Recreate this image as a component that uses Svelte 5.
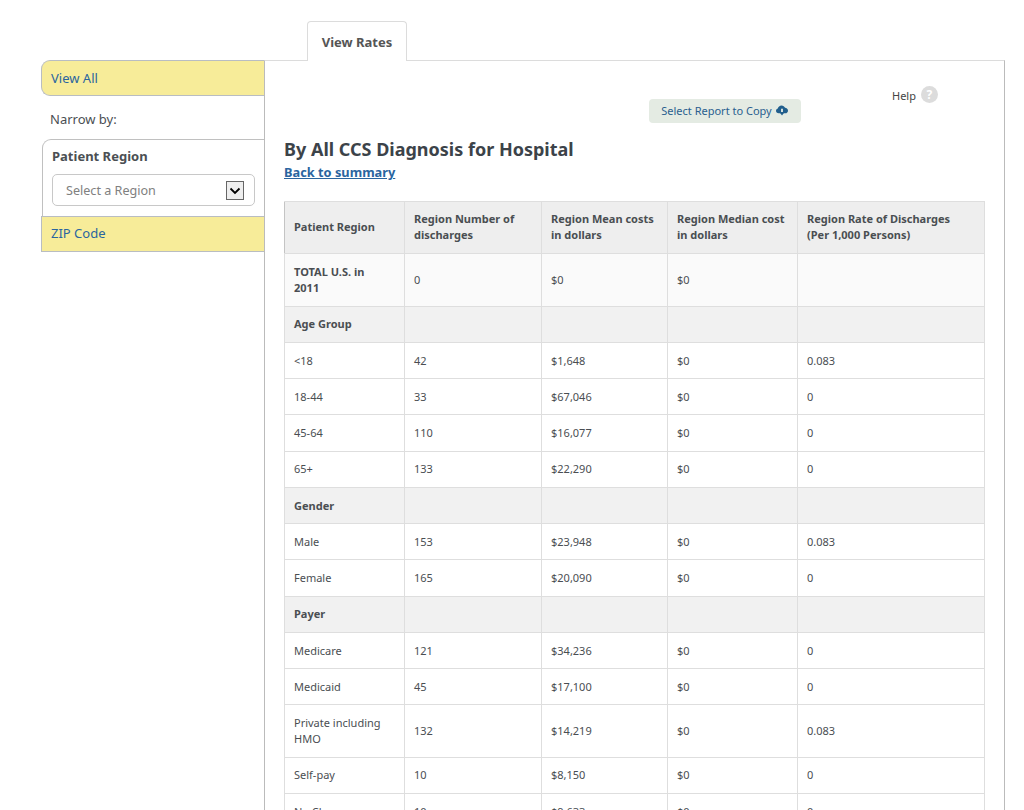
<script>
  const headers = [
    "Patient Region",
    "Region Number of discharges",
    "Region Mean costs in dollars",
    "Region Median cost in dollars",
    "Region Rate of Discharges (Per 1,000 Persons)"
  ];

  const rows = [
    { label: "TOTAL U.S. in 2011", values: ["0", "$0", "$0", ""], kind: "total" },
    { label: "Age Group", values: ["", "", "", ""], kind: "group" },
    { label: "<18", values: ["42", "$1,648", "$0", "0.083"] },
    { label: "18-44", values: ["33", "$67,046", "$0", "0"] },
    { label: "45-64", values: ["110", "$16,077", "$0", "0"] },
    { label: "65+", values: ["133", "$22,290", "$0", "0"] },
    { label: "Gender", values: ["", "", "", ""], kind: "group" },
    { label: "Male", values: ["153", "$23,948", "$0", "0.083"] },
    { label: "Female", values: ["165", "$20,090", "$0", "0"] },
    { label: "Payer", values: ["", "", "", ""], kind: "group" },
    { label: "Medicare", values: ["121", "$34,236", "$0", "0"] },
    { label: "Medicaid", values: ["45", "$17,100", "$0", "0"] },
    { label: "Private including HMO", values: ["132", "$14,219", "$0", "0.083"] },
    { label: "Self-pay", values: ["10", "$8,150", "$0", "0"] },
    { label: "No Charge", values: ["10", "$9,633", "$0", "0"] }
  ];
</script>

<div class="page">
  <div class="tabs">
    <button class="tab">View Rates</button>
  </div>

  <div class="layout">
    <aside class="sidebar">
      <a class="filter first" href="#all">View All</a>
      <p class="narrow">Narrow by:</p>
      <div class="region-box">
        <h3>Patient Region</h3>
        <div class="select-wrap">
          <select>
            <option>Select a Region</option>
          </select>
          <span class="arrow">
            <svg width="12" height="8" viewBox="0 0 12 8">
              <path d="M1.5 1.500 L6 6 L10.500 1.500" fill="none" stroke="#000" stroke-width="1.800" />
            </svg>
          </span>
        </div>
      </div>
      <a class="filter" href="#zip">ZIP Code</a>
    </aside>

    <main class="content">
      <div class="tools">
        <button class="copy">
          <span>Select Report to Copy</span>
          <svg width="12" height="11" viewBox="0 0 13 11">
            <path d="M3 8.500 C1 8.500 0 7.200 0 5.800 C0 4.500 .9 3.600 2 3.400 C2.400 1.400 4 0 6 0 C7.800 0 9.200 1 9.800 2.600 C11.600 2.700 13 4 13 5.700 C13 7.300 11.800 8.500 10 8.500 Z" fill="#215f8d" />
            <path d="M5.500 3.500 H7.500 V7 H5.500 Z" fill="#e4ebe3" />
            <path d="M3.800 7.500 H9.200 L6.500 11 Z" fill="#215f8d" />
          </svg>
        </button>
        <div class="help">Help <span class="help-icon">?</span></div>
      </div>

      <h1>By All CCS Diagnosis for Hospital</h1>
      <a class="back" href="#summary">Back to summary</a>

      <table>
        <thead>
          <tr>
            {#each headers as h}
              <th>{h}</th>
            {/each}
          </tr>
        </thead>
        <tbody>
          {#each rows as row}
            <tr class={row.kind}>
              <td class="label">{row.label}</td>
              {#each row.values as v}
                <td>{v}</td>
              {/each}
            </tr>
          {/each}
        </tbody>
      </table>
    </main>
  </div>
</div>

<style>
  :global(body) {
    background: #fff;
    font-family: "Noto Sans", "Open Sans", sans-serif;
    color: #3f4448;
  }
  .page {
    height: 810px;
    overflow: hidden;
    padding: 21px 19px 0 41px;
    box-sizing: border-box;
  }
  .tabs {
    display: flex;
    padding-left: 266px;
    height: 39px;
  }
  .tab {
    width: 100px;
    height: 40px;
    background: #fff;
    border: 1px solid #dcdcdc;
    border-bottom: none;
    border-radius: 4px 4px 0 0;
    font: bold 13px "Noto Sans", sans-serif;
    color: #555;
    padding: 0;
    position: relative;
    z-index: 2;
  }
  .layout {
    display: flex;
    align-items: stretch;
  }
  .sidebar {
    width: 223px;
    flex: none;
    position: relative;
    z-index: 1;
  }
  .filter {
    display: block;
    height: 34px;
    line-height: 33px;
    background: #f7ec99;
    border: 1px solid #b9bdc2;
    border-right: none;
    padding-left: 9px;
    font-size: 13px;
    color: #2a659f;
    text-decoration: none;
  }
  .filter.first {
    line-height: 35px;
    border-radius: 9px 0 0 9px;
  }
  .narrow {
    margin: 0;
    padding: 13px 0 0 9px;
    height: 30px;
    line-height: 20px;
    font-size: 13px;
    color: #4b4f53;
  }
  .region-box {
    margin-left: 1px;
    height: 76px;
    border: 1px solid #c0c0c0;
    border-right: none;
    border-bottom: none;
    border-radius: 9px 0 0 0;
    padding: 0 9px;
    background: #fff;
  }
  .region-box h3 {
    margin: 7px 0 9px;
    font-size: 13px;
    line-height: 18px;
    font-weight: bold;
    color: #4b4f53;
  }
  .select-wrap {
    position: relative;
    width: 203px;
  }
  select {
    appearance: none;
    display: block;
    width: 100%;
    height: 32px;
    border: 1px solid #c8c8c8;
    border-radius: 5px;
    background: #fff;
    padding: 0 0 0 13px;
    font: 12.6px "Noto Sans", sans-serif;
    color: #808080;
  }
  .arrow {
    position: absolute;
    right: 11px;
    top: 7px;
    width: 16px;
    height: 17px;
    border: 1px solid #666;
    background: #eee;
    display: flex;
    align-items: center;
    justify-content: center;
  }
  .content {
    flex: 1;
    min-width: 0;
    height: 760px;
    border-top: 1px solid #dcdcdc;
    border-left: 1px solid #bbb;
    border-right: 1px solid #bbb;
    padding: 0 19px;
    background: #fff;
  }
  .tools {
    position: relative;
    height: 62px;
  }
  .copy {
    position: absolute;
    left: 365px;
    top: 38px;
    width: 152px;
    height: 24px;
    border: none;
    border-radius: 4px;
    background: #e4ebe3;
    color: #2a5f8f;
    font: 11px "Noto Sans", sans-serif;
    padding: 0 1px 2px 0;
    display: flex;
    align-items: center;
    justify-content: center;
    gap: 4px;
  }
  .help {
    position: absolute;
    left: 608px;
    top: 26px;
    font-size: 11px;
    line-height: 18px;
    display: flex;
    align-items: center;
    gap: 5px;
    color: #444;
  }
  .help-icon {
    width: 17px;
    height: 17px;
    border-radius: 50%;
    background: #dcdcdc;
    color: #fff;
    font-weight: bold;
    font-size: 12px;
    line-height: 17px;
    text-align: center;
    margin-top: -3px;
  }
  h1 {
    margin: 0;
    padding-top: 13px;
    font-size: 18px;
    line-height: 27px;
    font-weight: bold;
    color: #3c4349;
  }
  .back {
    display: block;
    width: max-content;
    font-size: 12.8px;
    line-height: 18px;
    font-weight: bold;
    color: #2a659f;
  }
  table {
    width: 701px;
    margin-top: 20px;
    border-collapse: collapse;
    table-layout: fixed;
    font-size: 11px;
    line-height: 16px;
  }
  th, td {
    border: 1px solid #dedede;
    padding: 9.63px 9px;
    text-align: left;
    vertical-align: middle;
    color: #4a4e52;
    font-weight: normal;
  }
  th:nth-child(1), td:nth-child(1) { width: 101px; }
  th:nth-child(2), td:nth-child(2) { width: 118px; }
  th:nth-child(3), td:nth-child(3) { width: 107px; }
  th:nth-child(4), td:nth-child(4) { width: 111px; }
  th {
    background: #eee;
    font-weight: bold;
    padding-top: 9px;
    padding-bottom: 10.4px;
  }
  th:first-child {
    border-left-color: #c4c4c4;
  }
  th:last-child {
    padding-right: 24px;
  }
  .total td {
    background: #fafafa;
  }
  .total .label, .group .label {
    font-weight: bold;
  }
  .total .label {
    padding-right: 30px;
  }
  .group td {
    background: #f1f1f1;
  }
</style>
